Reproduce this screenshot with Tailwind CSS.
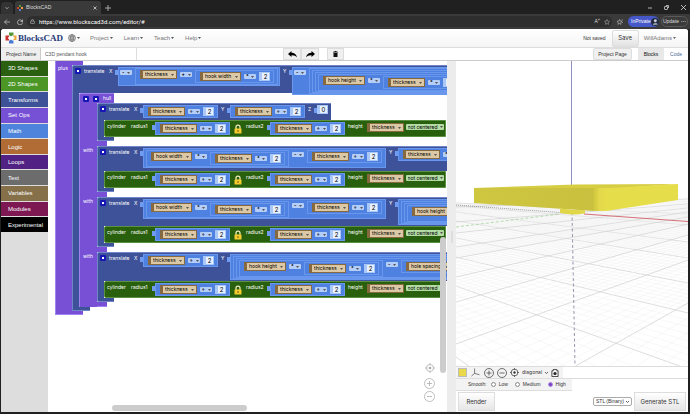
<!DOCTYPE html>
<html lang="en">
<head>
    <meta charset="UTF-8">
    <meta name="viewport" content="width=device-width, initial-scale=1.0">
    <title>BlocksCAD</title>
    <script src="https://cdn.jsdelivr.net/npm/@tailwindcss/browser@4"></script>
</head>
<body class="h-screen flex flex-col overflow-hidden bg-[#202020] font-['Liberation_Sans',sans-serif] text-[6px] leading-none text-[#333]">

    <!-- browser chrome -->
    <div class="flex h-[14px] shrink-0 items-end text-[#ddd]">
        <button aria-label="Tab actions" class="ml-px flex h-3 w-3 items-center justify-center rounded-t-sm bg-[#333]">
            <svg class="size-1" viewBox="0 0 8 8" fill="none" stroke="#ccc" stroke-width="1.5"><path d="M1 2.5 4 5.5 7 2.5"/></svg>
        </button>
        <div class="ml-[2px] flex h-[13px] w-[86px] items-center rounded-t-[3px] bg-[#3a3a3a] px-[2px] text-[5px]">
            <svg class="mr-[3px] size-[6px]" viewBox="0 0 12 12"><rect x="0" y="4" width="4" height="4" fill="#d0402f"/><rect x="4" y="0" width="4" height="4" fill="#5b9a3a"/><rect x="8" y="4" width="4" height="4" fill="#e8a33a"/><rect x="4" y="8" width="4" height="4" fill="#5a78d0"/></svg>
            <span class="grow">BlocksCAD</span>
            <button aria-label="Close tab" class="mr-[2px]"><svg class="size-1" viewBox="0 0 8 8" stroke="#ddd" stroke-width="1.5"><path d="M1 1 7 7M7 1 1 7"/></svg></button>
        </div>
        <button aria-label="New tab" class="ml-1 flex h-[13px] items-center"><svg class="size-[6px]" viewBox="0 0 8 8" stroke="#ccc" stroke-width="1"><path d="M4 0V8M0 4H8"/></svg></button>
        <div class="ml-auto flex h-[13px] items-center gap-3 pr-1">
            <button aria-label="Minimize"><svg class="size-1" viewBox="0 0 8 8" stroke="#ddd" stroke-width="1.5"><path d="M0 4H8"/></svg></button>
            <button aria-label="Restore"><svg class="size-[5px]" viewBox="0 0 10 10" fill="none" stroke="#ddd" stroke-width="1.5"><rect x="1" y="3" width="6" height="6" rx="1"/><path d="M4 1H9V6"/></svg></button>
            <button aria-label="Close"><svg class="size-[5px]" viewBox="0 0 8 8" stroke="#ddd" stroke-width="1.3"><path d="M0 0 8 8M8 0 0 8"/></svg></button>
        </div>
    </div>
    <div class="flex h-[15px] shrink-0 items-center bg-[#3a3a3a] text-[#ddd]">
        <button aria-label="Back" class="ml-1"><svg class="size-[6px]" viewBox="0 0 12 12" fill="none" stroke="#ddd" stroke-width="1.3"><path d="M12 6H1M6 1 1 6l5 5"/></svg></button>
        <button aria-label="Reload" class="ml-[7px]"><svg class="size-[6px]" viewBox="0 0 12 12" fill="none" stroke="#ddd" stroke-width="1.4"><path d="M10.5 4.5A5 5 0 1 0 11 7M11 1V5H7"/></svg></button>
        <div class="ml-1 flex h-[11px] min-w-0 grow items-center rounded-full bg-[#2e2e2e] pl-[3px] pr-[2px]">
            <svg class="size-[5px]" viewBox="0 0 12 12" fill="none" stroke="#ccc" stroke-width="1.3"><rect x="1.500" y="5" width="9" height="6" rx="1"/><path d="M3.500 5V3.500a2.500 2.500 0 0 1 5 0V5"/></svg>
            <input aria-label="Address" value="https://www.blockscad3d.com/editor/#" class="ml-1 min-w-0 grow bg-transparent font-[Roboto,sans-serif] text-[6px] text-white">
            <span class="mr-1 text-[5px]">A<sup class="text-[4px]">»</sup></span>
            <svg class="size-[6px]" viewBox="0 0 12 12" fill="none" stroke="#bbb"><path d="m6 1 1.500 3.300 3.500.4-2.600 2.400.7 3.600L6 9l-3.100 1.700.7-3.600L1 4.700l3.500-.4z"/></svg>
        </div>
        <svg class="mx-[5px] size-[6px]" viewBox="0 0 12 12" fill="none" stroke="#ddd"><path d="m5 1 1.500 3.300 3.500.4-2.600 2.400.7 3.600L5 9l-3.100 1.700.7-3.600L0 4.700l3.500-.4zM9 2h3M10 7h2"/></svg>
        <button class="flex h-[11px] w-[31px] items-center justify-between rounded-full bg-[#4657c8] pl-[3px] pr-[2px] text-[5px] text-white">InPrivate
            <svg class="size-[8px] shrink-0" viewBox="0 0 12 12"><circle cx="6" cy="6" r="6" fill="#222b3d"/><circle cx="6.500" cy="4" r="2.200" fill="#c9cdd8"/><path d="M3 11q0-4 3.500-4T10 10z" fill="#8e97a9"/></svg>
        </button>
        <button class="ml-[2px] mr-[2px] flex h-[11px] w-[27px] items-center justify-center gap-[2px] whitespace-nowrap rounded-full border border-[#5a5a5a] text-[5px]">Update <b>···</b></button>
    </div>

    <!-- page -->
    <div class="mx-px mb-[2px] mr-[2px] flex min-h-0 grow flex-col rounded-t-[3px] bg-white">
        <nav class="flex h-[19px] shrink-0 items-center rounded-t-[3px] border-b border-[#ddd] bg-linear-to-b from-white to-[#f5f5f5] pr-3 text-[#777]">
            <a href="#" class="ml-1 flex items-center">
                <svg class="size-3" viewBox="0 0 24 24">
                    <path d="M1 7h7v3a2 2 0 1 0 0 4v3H1z" fill="#c9302c"/>
                    <path d="M8 1h9v6h-3a2 2 0 1 1-4 0H8z" fill="#57973a"/>
                    <path d="M17 7h6v9h-6v-2a2 2 0 1 0 0-4z" fill="#eda63a"/>
                    <path d="M8 17h2a2 2 0 1 1 4 0h3v6H8z" fill="#4a7bd0"/>
                    <path d="M9 9h6v6H9z" fill="#fff"/>
                </svg>
                <span class="ml-px font-['Liberation_Serif',serif] text-[9px] font-bold text-[#25397a]">BlocksCAD</span>
            </a>
            <a href="#" aria-label="Language" class="ml-[5px] flex items-center gap-px">
                <svg class="size-2" viewBox="0 0 16 16" fill="none" stroke="#666" stroke-width="1.300"><circle cx="8" cy="8" r="7"/><ellipse cx="8" cy="8" rx="3.200" ry="7"/><path d="M1 8H15M8 1V15M2.300 4.500H13.700M2.300 11.500H13.700"/></svg>
                <svg class="h-[2px] w-[3px]" viewBox="0 0 6 4"><path d="M0 0H6L3 4z" fill="#555"/></svg>
            </a>
            <div id="menu" class="ml-[10px] flex items-center gap-[11px]"></div>
            <span class="ml-auto text-[5px] text-[#333]">Not saved</span>
            <button class="ml-[6px] h-[17px] w-[27px] rounded-[2px] border border-[#ddd] bg-linear-to-b from-white to-[#e2e2e2] font-[Inter,sans-serif] text-[6px] text-[#333]">Save</button>
            <a href="#" class="ml-[5px] flex items-center gap-px">WillAdams <svg class="h-[2px] w-[3px]" viewBox="0 0 6 4"><path d="M0 0H6L3 4z" fill="#666"/></svg></a>
        </nav>

        <div class="flex h-[13px] shrink-0 border-b border-[#ccc] text-[5px]">
            <label for="projectName" class="flex w-10 items-center border-r border-[#ccc] bg-[#eee] pl-[5px]">Project Name</label>
            <input id="projectName" value="C3D pendant hook" class="w-24 border-r border-[#ddd] pl-1 text-[#555]">
            <button aria-label="Undo" class="ml-[146px] flex w-[18px] items-center justify-center border border-[#ddd] bg-[#f0f0f0]">
                <svg class="h-[7px] w-[9px]" viewBox="0 0 18 14"><path d="M7 0v3.500c6 0 10 3 11 9.500-2.500-3-5.500-4.500-11-4.300V12L0 6z"/></svg>
            </button>
            <button aria-label="Redo" class="flex w-[18px] items-center justify-center border border-[#ddd] bg-[#f0f0f0]">
                <svg class="h-[7px] w-[9px]" viewBox="0 0 18 14"><path d="M11 0v3.500C5 3.500 1 6.500 0 13c2.500-3 5.500-4.500 11-4.300V12l7-6z"/></svg>
            </button>
            <button aria-label="Delete" class="ml-2 flex w-[17px] items-center justify-center border border-[#ddd] bg-[#f0f0f0]">
                <svg class="h-[6px] w-[5px]" viewBox="0 0 10 12"><path d="M0 1.500h3V0h4v1.500h3V3H0zM1 4h8v8H1z" fill="#111"/></svg>
            </button>
            <button class="ml-auto w-[39px] rounded-[2px] border border-[#ddd] bg-[#f0f0f0]">Project Page</button>
            <button class="ml-[6px] w-[26px] bg-[#e8e8e8] text-[#111]">Blocks</button>
            <button class="w-[24px] text-[#4a6a94]">Code</button>
        </div>

        <main class="flex min-h-0 grow">
            <div id="toolbox" class="w-[47px] shrink-0 bg-[#ddd]"></div>

            <section class="relative min-w-0 grow overflow-hidden bg-white">
                <div id="workspace" class="flex items-start pl-[7px] font-[Inter,sans-serif] text-[5px] text-white"></div>
                <div class="absolute bottom-[10px] right-3 flex flex-col items-center gap-[2px] text-[#999]">
                    <button aria-label="Center" class="mb-[3px]"><svg class="size-[10px]" viewBox="0 0 20 20" fill="none" stroke="#aaa" stroke-width="1.500"><circle cx="10" cy="10" r="7"/><circle cx="10" cy="10" r="2" fill="#999"/><path d="M10 0V4M10 16V20M0 10H4M16 10H20"/></svg></button>
                    <button aria-label="Zoom in"><svg class="size-[11px]" viewBox="0 0 22 22" fill="none" stroke="#aaa" stroke-width="1.500"><circle cx="11" cy="11" r="10"/><path d="M11 6V16M6 11H16"/></svg></button>
                    <button aria-label="Zoom out"><svg class="size-[11px]" viewBox="0 0 22 22" fill="none" stroke="#aaa" stroke-width="1.500"><circle cx="11" cy="11" r="10"/><path d="M6 11H16"/></svg></button>
                </div>
                <div class="absolute right-px top-[50%] h-[39%] w-[6px] rounded-full bg-[#ccc]"></div>
                <div class="absolute bottom-px left-[16%] h-[6px] w-[34%] rounded-full bg-[#ccc]"></div>
            </section>

            <div class="flex w-[9px] shrink-0 items-center justify-center bg-[#ececec]"><div class="h-3 w-[2px] bg-[#ddd]"></div></div>

            <section class="flex w-[232px] shrink-0 flex-col text-[#333]">
                <svg class="min-h-0 w-full grow" viewBox="456 61 232 305" preserveAspectRatio="none" id="scene">
                    <defs>
                        <linearGradient id="corner"><stop offset="0" stop-color="#cdc43d"/><stop offset=".4" stop-color="#e3d94a"/><stop offset="1" stop-color="#e8df4b"/></linearGradient>
                        <linearGradient id="front"><stop offset="0" stop-color="#cfc740"/><stop offset="1" stop-color="#c9c03f"/></linearGradient>
                    </defs>
                    <g id="grid" fill="none"></g>
                    <path d="M456 205 560 212.500" stroke="#777" stroke-width=".7" stroke-dasharray="1 1"/>
                    <path d="M456 227 560 214" stroke="#a4d49a" stroke-width=".8" stroke-dasharray="3 2"/>
                    <path d="M584 214 688 221.500" stroke="#d0606a" stroke-width=".9"/>
                    <path d="M572 212 575 366" stroke="#8a8aa5" stroke-width=".9" stroke-dasharray="3 2.500"/>
                    <path d="M571.500 61V187" stroke="#8284b8" stroke-width=".9"/>
                    <path d="M474 188 576 184.500 678 184 609 189H593z" fill="#d6cd43"/>
                    <path d="M474 188H594V211L474 203z" fill="url(#front)"/>
                    <path d="M593 188h17v22.500q-8 1-17 .3z" fill="url(#corner)"/>
                    <path d="M609 188 678 184V200L609 210.600z" fill="#e6dd4a"/>
                    <path d="M560 208.500q12 1.500 25 1.700v3q-12 2.500-25-.2z" fill="#e0d748"/>
                </svg>
                <div class="flex h-[13px] shrink-0 items-center border-y border-[#ddd] text-[5px]">
                    <div class="flex h-full items-center gap-[3px] bg-[#f3f3f3] pl-[2px] pr-1">
                        <button aria-label="Model color" class="size-[9px] border border-[#bbb] bg-[#e8d84a]"></button>
                        <button aria-label="Axes" class="ml-px"><svg class="size-[9px]" viewBox="0 0 20 20" fill="none" stroke="#444" stroke-width="1.500"><path d="M8 1V12L19 15M8 12 1 18"/></svg></button>
                        <button aria-label="Zoom in" class="ml-px"><svg class="size-[10px]" viewBox="0 0 20 20" fill="none" stroke="#444" stroke-width="1.500"><circle cx="10" cy="10" r="9"/><path d="M10 5V15M5 10H15"/></svg></button>
                        <button aria-label="Zoom out"><svg class="size-[10px]" viewBox="0 0 20 20" fill="none" stroke="#444" stroke-width="1.500"><circle cx="10" cy="10" r="9"/><path d="M5 10H15"/></svg></button>
                        <button aria-label="Reset view"><svg class="size-[9px]" viewBox="0 0 20 20" fill="none" stroke="#444" stroke-width="1.700"><circle cx="10" cy="10" r="7.500"/><circle cx="10" cy="10" r="2" fill="#333"/><path d="M10 0V4M10 16V20M0 10H4M16 10H20"/></svg></button>
                        <label class="flex items-center gap-[2px]"><select aria-label="View" class="appearance-none font-[Inter,sans-serif] text-[5px]"><option>diagonal</option></select><svg class="h-[2px] w-[3px]" viewBox="0 0 6 4" fill="none" stroke="#333" stroke-width="1.500"><path d="M0 0 3 3 6 0"/></svg></label>
                        <button aria-label="Take picture"><svg class="size-[8px]" viewBox="0 0 18 18"><path d="M2 4H5V1H13V4H16V17H2z" fill="none" stroke="#222" stroke-width="1.800"/><circle cx="9" cy="10" r="3.500" fill="#222"/></svg></button>
                    </div>
                </div>
                <div class="flex h-3 w-[50%] shrink-0 items-center gap-[7px] border-b border-[#ddd] bg-[#f3f3f3] pl-3 text-[5px]">
                    <span class="-mr-[3px]">Smooth:</span>
                    <label class="flex items-center gap-[3px]"><input type="radio" name="smooth" class="size-[5px] appearance-none rounded-full border border-[#888] bg-white">Low</label>
                    <label class="flex items-center gap-[3px]"><input type="radio" name="smooth" class="size-[5px] appearance-none rounded-full border border-[#888] bg-white">Medium</label>
                    <label class="flex items-center gap-[3px]"><input type="radio" name="smooth" checked class="size-[5px] appearance-none rounded-full border border-[#a98fd8] bg-[#7d3fd0]">High</label>
                </div>
                <div class="flex h-[21px] shrink-0 items-center px-[2px]">
                    <button class="h-[19px] w-[37px] border border-[#ddd] bg-linear-to-b from-white to-[#e6e6e6] font-[Inter,sans-serif]">Render</button>
                    <label class="ml-auto mr-[2px] flex h-[9px] w-[39px] items-center justify-between rounded-[2px] border border-[#aaa] px-[2px]"><select aria-label="Format" class="appearance-none text-[5px]"><option>STL (Binary)</option></select><svg class="h-[2px] w-[3px]" viewBox="0 0 6 4" fill="none" stroke="#333" stroke-width="1.500"><path d="M0 0 3 3 6 0"/></svg></label>
                    <button class="h-[19px] w-[52px] whitespace-nowrap border border-[#ddd] bg-linear-to-b from-white to-[#e6e6e6] font-[Inter,sans-serif]">Generate STL</button>
                </div>
            </section>
        </main>
    </div>

    <script>
        const caret = '<svg class="h-[2px] w-[3px] shrink-0" viewBox="0 0 6 4"><path d="M0 0H6L3 4z" fill="#555"/></svg>';

        document.getElementById('menu').innerHTML = ['Project', 'Learn', 'Teach', 'Help']
            .map(name => `<a href="#" class="flex items-center gap-px">${name}${caret}</a>`).join('');

        const categories = [
            ['3D Shapes', 'bg-[#2a6010]'], ['2D Shapes', 'bg-[#4c9626]'], ['Transforms', 'bg-[#3e5298]'],
            ['Set Ops', 'bg-[#7650d5]'], ['Math', 'bg-[#4f84dc]'], ['Logic', 'bg-[#b06c34]'],
            ['Loops', 'bg-[#512183]'], ['Text', 'bg-[#6c6c6c]'], ['Variables', 'bg-[#85704a]'],
            ['Modules', 'bg-[#7d1852]'], ['Experimental', 'bg-black']
        ];
        document.getElementById('toolbox').innerHTML = '<div class="flex h-[171px] flex-col gap-px">' +
            categories.map(([name, color]) => `<button class="flex-1 pl-[7px] text-left text-white ${color}">${name}</button>`).join('') + '</div>';

        // value blocks
        function variable(name) {
            return `<label class="flex h-[9px] shrink-0 items-center border-y border-r border-l-[3px] border-[#86693e] bg-[#dcc8a4] pl-[2px] pr-[2px] gap-[3px] text-black">
                <select aria-label="Variable" class="appearance-none leading-none">
                    <option>${name}</option>
                </select>${caret}</label>`;
        }
        function number(n) {
            return `<input aria-label="Number" value="${n}" class="h-[9px] w-[11px] shrink-0 border border-l-[3px] border-[#a9c8f8] bg-[#e6f0ff] text-center text-[6px] text-black">`;
        }
        function operator(sym) {
            return `<label class="mt-[2px] flex h-[5px] w-3 shrink-0 items-center justify-center gap-[2px] rounded-[1px] bg-[#b5cef8] text-black">
                <select aria-label="Operator" class="appearance-none font-bold leading-none"><option>${sym}</option></select>${caret}</label>`;
        }
        function op(left, sym, right) {
            return `<div class="flex shrink-0 items-start gap-[3px] border border-[#6a97ee] bg-[#4f81e0] py-px pl-1 pr-[3px]">${left}${operator(sym)}${right}</div>`;
        }
        // operator whose left input is another operator
        function chain(left, sym, right) {
            return `<div class="flex shrink-0 items-start gap-[3px] border border-[#6a97ee] bg-[#4f81e0] pt-px pl-[2px] pr-[3px]">${left}${sym ? operator(sym) : ''}${right || ''}</div>`;
        }
        function negate(value) {
            return `<div class="flex shrink-0 items-start gap-[3px] border border-[#6a97ee] bg-[#4f81e0] pl-px pr-px">${operator('-')}${value}</div>`;
        }
        const half = op(variable('thickness'), '÷', number(2));
        const twice = op(variable('thickness'), '*', number(2));
        const notch = '<i class="mt-1 h-[5px] w-[3px] shrink-0 bg-[#6f9cf0]"></i>';
        const gear = '<i class="flex size-[6px] shrink-0 items-center justify-center rounded-[1px] bg-[#1717b5]"><i class="size-[2px] bg-white"></i></i>';

        // statement blocks
        function axis(name, value) {
            return `<span class="mt-[3px] w-[9px] shrink-0 pl-[3px]">${name}</span>${notch}<div class="mt-px flex">${value}</div>`;
        }
        function translateRow(height, x, rest) {
            return `<div class="flex ${height} items-start rounded-tl-[2px] border-l border-t border-[#7186c8] bg-[#3d5299] pr-[3px]">
                <div class="mt-[2px] flex w-[33px] shrink-0 items-center gap-[3px] pl-[2px]">${gear}translate</div>
                ${axis('X', x)}${rest}</div>`;
        }
        const lock = '<svg class="mx-1 mt-[3px] h-[10px] w-2 shrink-0" viewBox="0 0 16 20"><path d="M4 10V6a4 4 0 0 1 8 0v4" fill="none" stroke="#f3ecc0" stroke-width="2.500"/><rect x="1" y="9" width="14" height="10" rx="1" fill="#f6cb2e"/><path d="M8 12v4" stroke="#7a5a10" stroke-width="2"/></svg>';
        const cylinder = `<div class="flex h-[17px] w-[342px] items-start rounded-l-[2px] border border-[#5b9142] bg-[#28600e]">
            <span class="mt-[3px] w-[26px] shrink-0 pl-[2px]">cylinder</span>
            <span class="mt-[3px] w-[21px] shrink-0">radius1</span>${notch}<div class="mt-px">${half}</div>
            ${lock}<span class="mt-[3px] w-[21px] shrink-0">radius2</span>${notch}<div class="mt-px">${half}</div>
            <span class="mt-[3px] w-[22px] shrink-0 pl-[3px]">height</span><div class="mt-[2px] flex">${variable('thickness')}</div>
            <label class="ml-[2px] mt-[3px] flex h-[6px] w-[38px] shrink-0 items-center justify-center gap-[2px] rounded-[1px] bg-[#b4dba4] text-black"><select aria-label="Centering" class="appearance-none leading-none"><option>not centered</option></select>${caret}</label>
        </div>`;

        function arm(label, row, stub) {
            return `<div class="flex items-stretch">
                <div class="w-[18px] shrink-0 border-l border-[#9f83ee] bg-[#7850d6] pl-[3px] pt-[2px]">${label}</div>
                <div class="flex flex-col items-start">
                    ${row}
                    <div class="flex"><div class="w-[7px] border-l border-[#7186c8] bg-[#3d5299]"></div>${cylinder}</div>
                    <div class="h-1 w-[17px] rounded-bl-[2px] border-b border-l border-[#7186c8] bg-[#3d5299]"></div>
                    <div class="${stub} w-[10px] bg-[#7850d6]"></div>
                </div></div>`;
        }

        const width = op(variable('hook width'), '*', twice);
        const height = op(variable('hook height'), '*', twice);
        const spacing = op(variable('hole spacing'), '÷', number(2));

        const hull = `<div>
            <div class="flex h-[10px] w-[35px] items-center gap-1 rounded-tl-[2px] border-l border-t border-[#9f83ee] bg-[#7850d6] pl-[3px]">${gear}${gear}hull</div>
            ${arm('', translateRow('h-[17px]', half, axis('Y', half) + axis('Z', number(0))), 'h-[5px]')}
            ${arm('with', translateRow('h-[25px]', chain(width, '-', half), axis('Y', twice)), 'h-[5px]')}
            ${arm('with', translateRow('h-[29px]', chain(width, '-', half), axis('Y', chain(chain(chain(height, '-', spacing))))), 'h-[5px]')}
            ${arm('with', translateRow('h-[29px]', half, axis('Y', chain(chain(chain(height, '-', spacing))))), 'h-[5px] border-b border-[#9f83ee]')}
        </div>`;

        const outerX = negate(op(variable('thickness'), '+', op(variable('hook width'), '*', number(2))));
        const outerY = negate(chain(chain(chain(height, '-', spacing))));

        document.getElementById('workspace').innerHTML = `
            <div class="flex border-l border-[#9f83ee]">
                <div class="w-4 shrink-0 border-b border-[#9f83ee] bg-[#7850d6] pl-[2px] pt-[5px]">plus</div>
                <div class="flex flex-col items-start">
                    <div class="h-1 w-[11px] bg-[#7850d6]"></div>
                    ${translateRow('h-[28px]', outerX, axis('Y', outerY))}
                    <div class="flex"><div class="w-[7px] border-l border-[#7186c8] bg-[#3d5299]"></div>${hull}</div>
                    <div class="h-1 w-[18px] border-b border-l border-[#7186c8] bg-[#3d5299]"></div>
                    <div class="h-1 w-[11px] border-b border-[#9f83ee] bg-[#7850d6]"></div>
                </div>
            </div>`;

        // floor grid: y at the left and right edges for each major line
        const families = [
            [[203, 214], [206, 225], [212, 242], [221, 258], [238, 283], [257, 313], [286, 369], [357, 520]],
            [[207, 199], [222, 204], [233, 208], [247, 212], [258, 217], [277, 224], [302, 235], [344, 260], [433, 303], [640, 420]]
        ];
        let lines = '';
        families.forEach(f => f.forEach(([a, b], i) => {
            lines += `<path d="M456 ${a}L688 ${b}" stroke="#d4d4d4" stroke-width=".8"/>`;
            const next = f[i + 1];
            if (!next) return;
            for (let k = 1; k < 8; k++) {
                const t = k / 8;
                lines += `<path d="M456 ${a + (next[0] - a) * t}L688 ${b + (next[1] - b) * t}" stroke="#f1f1f1" stroke-width=".5"/>`;
            }
        }));
        document.getElementById('grid').innerHTML = lines;
    </script>
</body>
</html>
